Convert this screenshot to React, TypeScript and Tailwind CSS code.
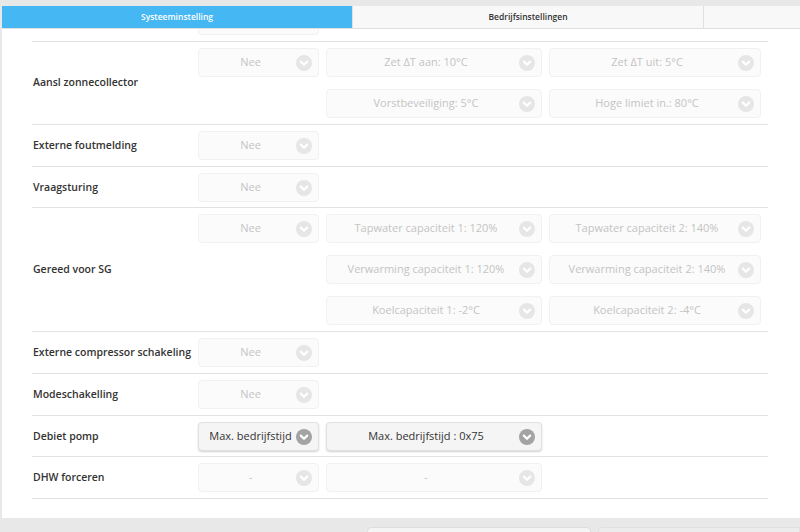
import React from 'react';

type Opt = { text: string; col: number; active?: boolean };

const Chevron: React.FC<{ active?: boolean }> = ({ active }) => (
  <svg className="absolute right-[6px] top-1/2 -translate-y-1/2 w-[16px] h-[16px]" viewBox="0 0 16 16">
    <circle cx="8" cy="8" r="8" fill={active ? '#a3a3a3' : '#e6e6e6'} />
    <path d="M4.8 6.6 L8 9.8 L11.2 6.6" fill="none" stroke="#ffffff" strokeWidth={2.2} strokeLinecap="round" strokeLinejoin="round" />
  </svg>
);

const Select: React.FC<{ text: string; active?: boolean; className?: string }> = ({ text, active, className }) => (
  <div
    className={
      'relative h-[29px] rounded-[4px] border flex items-center justify-center pl-[8px] pr-[24px] text-[11px] whitespace-nowrap ' +
      (active
        ? 'bg-[#f5f5f5] border-[#e2e2e2] text-[#333333] shadow-[0_1px_2px_rgba(0,0,0,0.18)] '
        : 'bg-[#fbfbfb] border-[#f1f1f1] text-[#c4c4c4] ') +
      (className ?? '')
    }
  >
    <span>{text}</span>
    <Chevron active={active} />
  </div>
);

const colClass = ['col-start-1', 'col-start-2', 'col-start-3'];
const rowClass = ['row-start-1', 'row-start-2', 'row-start-3'];

const rows: { label: string; tight?: boolean; lines: Opt[][] }[] = [
  {
    label: 'Aansl zonnecollector',
    lines: [
      [{ text: 'Nee', col: 0 }, { text: 'Zet ΔT aan: 10°C', col: 1 }, { text: 'Zet ΔT uit: 5°C', col: 2 }],
      [{ text: 'Vorstbeveiliging: 5°C', col: 1 }, { text: 'Hoge limiet in.: 80°C', col: 2 }],
    ],
  },
  { label: 'Externe foutmelding', lines: [[{ text: 'Nee', col: 0 }]] },
  { label: 'Vraagsturing', tight: true, lines: [[{ text: 'Nee', col: 0 }]] },
  {
    label: 'Gereed voor SG',
    lines: [
      [{ text: 'Nee', col: 0 }, { text: 'Tapwater capaciteit 1: 120%', col: 1 }, { text: 'Tapwater capaciteit 2: 140%', col: 2 }],
      [{ text: 'Verwarming capaciteit 1: 120%', col: 1 }, { text: 'Verwarming capaciteit 2: 140%', col: 2 }],
      [{ text: 'Koelcapaciteit 1: -2°C', col: 1 }, { text: 'Koelcapaciteit 2: -4°C', col: 2 }],
    ],
  },
  { label: 'Externe compressor schakeling', lines: [[{ text: 'Nee', col: 0 }]] },
  { label: 'Modeschakelling', lines: [[{ text: 'Nee', col: 0 }]] },
  {
    label: 'Debiet pomp',
    tight: true,
    lines: [[{ text: 'Max. bedrijfstijd', col: 0, active: true }, { text: 'Max. bedrijfstijd : 0x75', col: 1, active: true }]],
  },
  { label: 'DHW forceren', lines: [[{ text: '-', col: 0 }, { text: '-', col: 1 }]] },
];

export default function App() {
  return (
    <div className="w-[800px] h-[532px] overflow-hidden bg-[#e8e8e8] pt-[6px] font-['Open_Sans',sans-serif]">
      {/* Tabs */}
      <div className="ml-[2px] flex h-[23px] text-[8.5px] font-semibold border-b border-[#e0e0e0]">
        <div className="w-[350px] bg-[#45b7f3] text-white flex items-center justify-center">Systeeminstelling</div>
        <div className="w-[352px] bg-[#f8f8f8] text-[#333333] flex items-center justify-center border-l border-r border-[#e0e0e0]">
          Bedrijfsinstellingen
        </div>
        <div className="flex-1 bg-[#f8f8f8]" />
      </div>

      {/* Panel */}
      <div className="ml-[2px] h-[489px] bg-white pl-[30px]">
        <div className="h-[12px] pl-[166px]">
          <div className="w-[121px] h-[6px] rounded-b-[4px] bg-[#fbfbfb] border border-t-0 border-[#f1f1f1]" />
        </div>
        <div className="w-[736px] border-b border-[#e2e2e2]">
          {rows.map((row, i) => (
            <div key={i} className={'flex border-t border-[#e2e2e2] pt-[6px] ' + (row.tight ? 'pb-[5px]' : 'pb-[6px]')}>
              <div className="w-[166px] flex items-center pl-[1px] text-[10.5px] font-semibold text-[#333333] whitespace-nowrap">
                {row.label}
              </div>
              <div className="grid grid-cols-[121px_216px_212px] gap-x-[7px] gap-y-[12px]">
                {row.lines.map((line, li) =>
                  line.map((o, oi) => (
                    <Select key={li + '-' + oi} text={o.text} active={o.active} className={colClass[o.col] + ' ' + rowClass[li]} />
                  ))
                )}
              </div>
            </div>
          ))}
        </div>
      </div>

      {/* Bottom buttons */}
      <div className="flex pt-[9px] pl-[367px] gap-[7px]">
        <div className="w-[224px] h-[20px] rounded-t-[4px] bg-[#f4f4f4] border border-[#dddddd]" />
        <div className="flex-1 h-[20px] rounded-tl-[4px] bg-[#ececec] border border-[#e0e0e0]" />
      </div>
    </div>
  );
}
